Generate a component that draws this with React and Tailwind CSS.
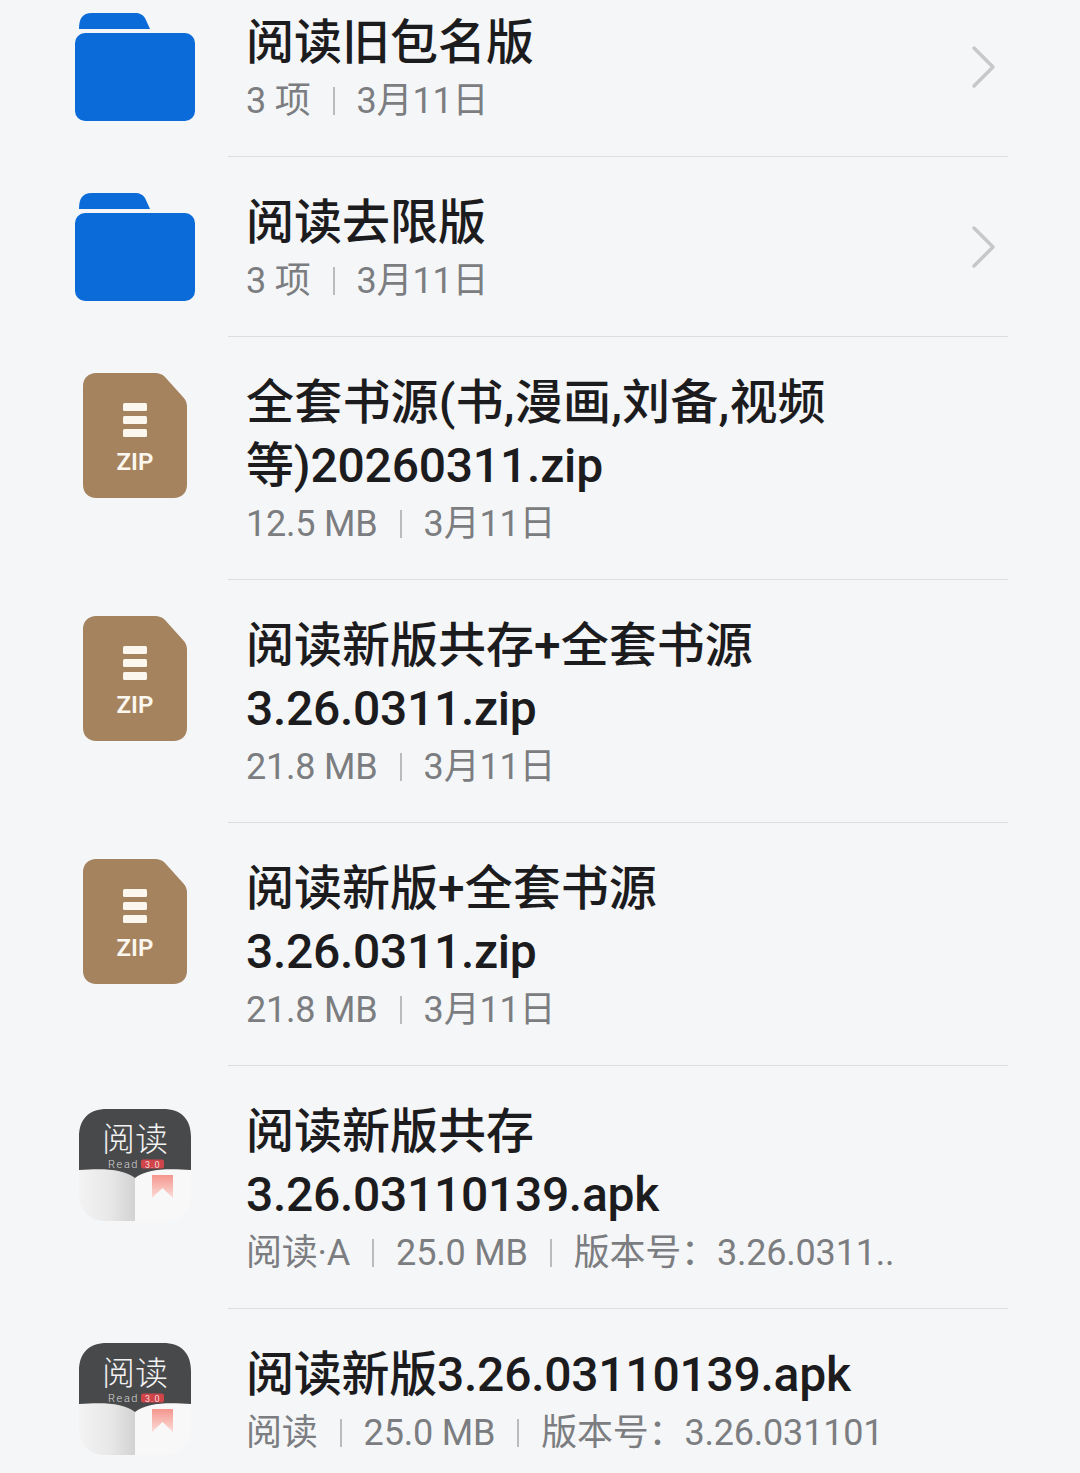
const FONT = "font-['Roboto','Noto_Sans_CJK_SC',sans-serif]";

function Folder() {
  return (
    <svg width="120" height="108" viewBox="0 0 120 108" className="block">
      <path d="M4 16 C4 6 7 0 17 0 H60 C65 0 68 2 70 5 L75 16 Z" fill="#0b6bd8" />
      <rect x="0" y="20" width="120" height="88" rx="10" fill="#0b6bd8" />
    </svg>
  );
}

function ZipIcon() {
  return (
    <div className="relative w-[104px] h-[125px]">
      <svg width="104" height="125" viewBox="0 0 104 125" className="block">
        <path d="M13 0 H72 C76 0 79 1 82 4 L100 24 C103 27 104 30 104 34 V112 C104 120 98 125 91 125 H13 C6 125 0 120 0 112 V13 C0 5 6 0 13 0 Z" fill="#a5835f" />
        <rect x="40" y="30" width="24" height="8" rx="1.5" fill="#fbf6ee" />
        <rect x="40" y="43" width="24" height="8" rx="1.5" fill="#fbf6ee" />
        <rect x="40" y="56" width="24" height="8" rx="1.5" fill="#fbf6ee" />
      </svg>
      <span className="absolute left-0 right-0 top-[75px] text-center text-[24px] leading-[28px] font-semibold text-[#fbf6ee] font-['Roboto',sans-serif]">ZIP</span>
    </div>
  );
}

function AppIcon({ id }) {
  return (
    <svg width="112" height="112" viewBox="0 0 112 112" className="block">
      <defs>
        <linearGradient id={`page-${id}`} x1="0" y1="0" x2="1" y2="0">
          <stop offset="0" stopColor="#f3f3f3" />
          <stop offset="0.55" stopColor="#e8e8e8" />
          <stop offset="1" stopColor="#d2d2d2" />
        </linearGradient>
        <linearGradient id={`mark-${id}`} x1="0" y1="0" x2="0" y2="1">
          <stop offset="0" stopColor="#f4968e" />
          <stop offset="1" stopColor="#fcdcd8" />
        </linearGradient>
      </defs>
      <path d="M56 60 V112 H28 C10 112 0 102 0 84 V60 Z" fill={`url(#page-${id})`} />
      <path d="M56 60 V112 H84 C102 112 112 102 112 84 V60 Z" fill="#f8f8f8" />
      <path d="M28 0 H84 C102 0 112 10 112 28 V61 C87 59 67 60 56 69 C45 60 25 59 0 61 V28 C0 10 10 0 28 0 Z" fill="#48494b" />
      <path d="M73 66 H94 V89 L83.5 79 L73 89 Z" fill={`url(#mark-${id})`} />
      <text x="23" y="42" fontSize="33" fontWeight="300" fill="#f2f2f2" fontFamily="'Noto Sans CJK SC',sans-serif" textLength="66">阅读</text>
      <text x="29" y="59" fontSize="11" fontWeight="300" fill="#d8d8d8" fontFamily="Roboto,sans-serif" letterSpacing="1.6">Read</text>
      <rect x="62" y="50.5" width="23" height="9" rx="2" fill="#d0454a" />
      <text x="66" y="58.5" fontSize="9" fill="#f6dcdc" fontFamily="Roboto,sans-serif" letterSpacing="1">3.0</text>
    </svg>
  );
}

function Chevron() {
  return (
    <svg width="28" height="44" viewBox="0 0 28 44" className="block mb-[6px]">
      <path d="M4 3 L23 22 L4 41" fill="none" stroke="#c6c8ca" strokeWidth="3.5" strokeLinecap="round" strokeLinejoin="round" />
    </svg>
  );
}

function Meta({ items }) {
  return (
    <div className="flex items-center gap-[22px] h-[54px] text-[36px] leading-[54px] tracking-[-0.2px] text-[#7b7d80] whitespace-nowrap">
      {items.map((t, i) => (
        <div key={t} className="flex items-center gap-[22px]">
          {i > 0 && <span className="w-[2px] h-[28px] bg-[#b9bbbd]" />}
          <span>{t}</span>
        </div>
      ))}
    </div>
  );
}

function Row({ icon, iconTop, lines, meta, chevron, last }) {
  return (
    <div className={`flex ${FONT}`}>
      <div className={`w-[228px] shrink-0 flex justify-center pl-[42px] ${iconTop || "items-center"}`}>
        {icon}
      </div>
      <div className={`w-[780px] flex items-center pl-[18px] pr-[10px] pt-[34px] pb-[28px] ${last ? "" : "border-b border-[#dcdee0]"}`}>
        <div className="flex-1 min-w-0">
          {lines.map(([text, track]) => (
            <div key={text} className={`text-[48px] leading-[63px] font-medium text-[#1c1c1e] whitespace-nowrap ${track}`}>{text}</div>
          ))}
          <Meta items={meta} />
        </div>
        {chevron && <Chevron />}
      </div>
    </div>
  );
}

export default function App() {
  return (
    <div className="w-[1080px] h-[1473px] overflow-hidden bg-[#f5f6f8]">
      <div className="-mt-[23px]">
        <Row icon={<Folder />} lines={[["阅读旧包名版", ""]]} meta={["3 项", "3月11日"]} chevron />
        <Row icon={<Folder />} lines={[["阅读去限版", ""]]} meta={["3 项", "3月11日"]} chevron />
        <Row icon={<ZipIcon />} iconTop="items-start pt-[36px]" lines={[["全套书源(书,漫画,刘备,视频", "tracking-[0.2px]"], ["等)20260311.zip", "tracking-[-0.2px]"]]} meta={["12.5 MB", "3月11日"]} />
        <Row icon={<ZipIcon />} iconTop="items-start pt-[36px]" lines={[["阅读新版共存+全套书源", ""], ["3.26.0311.zip", "tracking-[-0.3px]"]]} meta={["21.8 MB", "3月11日"]} />
        <Row icon={<ZipIcon />} iconTop="items-start pt-[36px]" lines={[["阅读新版+全套书源", ""], ["3.26.0311.zip", "tracking-[-0.3px]"]]} meta={["21.8 MB", "3月11日"]} />
        <Row icon={<AppIcon id="a" />} iconTop="items-start pt-[43px]" lines={[["阅读新版共存", ""], ["3.26.03110139.apk", "tracking-[-0.3px]"]]} meta={["阅读·A", "25.0 MB", "版本号：3.26.0311.."]} />
        <Row icon={<AppIcon id="b" />} lines={[["阅读新版3.26.03110139.apk", "tracking-[-0.25px]"]]} meta={["阅读", "25.0 MB", "版本号：3.26.031101"]} last />
      </div>
    </div>
  );
}
